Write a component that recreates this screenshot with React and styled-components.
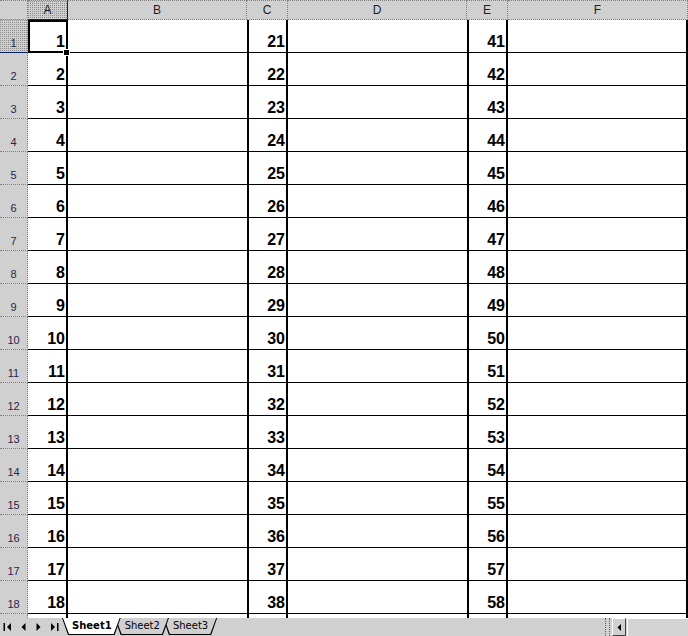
import React from "react";
import styled, { createGlobalStyle, css } from "styled-components";

const GlobalStyle = createGlobalStyle`
  html, body {
    margin: 0;
    padding: 0;
    background: #fff;
  }
  body {
    font-family: "Liberation Sans", Arial, sans-serif;
  }
`;

const COLUMNS = [
  { name: "A", thickRight: true, base: 0 },
  { name: "B" },
  { name: "C", thickLeft: true, thickRight: true, base: 20 },
  { name: "D" },
  { name: "E", thickLeft: true, thickRight: true, base: 40 },
  { name: "F", thickRight: true },
];

const ROWS = Array.from({ length: 18 }, (_, i) => i + 1);

const hatch = css`
  background-color: #d0d0d0;
  background-image: conic-gradient(at 1px 1px, transparent 75%, #8a8a8a 0);
  background-size: 2px 2px;
`;

const Window = styled.div`
  width: 688px;
  height: 636px;
  display: flex;
  flex-direction: column;
  overflow: hidden;
  background: #fff;
`;

const Sheet = styled.div`
  display: grid;
  grid-template-columns: 28px 40px 179px 41px 179px 41px 180px;
  grid-template-rows: 20px repeat(18, 33px) 4px;
`;

const Corner = styled.div`
  box-sizing: border-box;
  background: #d0d0d0;
  border-top: 1px dotted #808080;
  border-right: 1px dotted #808080;
  border-bottom: 1px dotted #808080;
`;

const ColHeader = styled.div`
  box-sizing: border-box;
  display: flex;
  align-items: center;
  justify-content: center;
  background: #d0d0d0;
  border-top: 1px dotted #808080;
  border-right: 1px dotted #808080;
  border-bottom: 1px dotted #808080;
  font-size: 12px;
  color: #1e1e2a;
  ${(p) =>
    p.$selected &&
    css`
      ${hatch};
      border-right: 1px solid #0a246a;
      border-bottom: 1px solid #0a246a;
    `}
`;

const RowHeader = styled.div`
  box-sizing: border-box;
  display: flex;
  align-items: flex-end;
  justify-content: center;
  padding-bottom: 3px;
  background: #d0d0d0;
  border-right: 1px dotted #808080;
  border-bottom: ${(p) => (p.$tail ? "none" : "1px dotted #808080")};
  font-size: 11px;
  line-height: 11px;
  color: #26264e;
  ${(p) =>
    p.$selected &&
    css`
      ${hatch};
      border-bottom: 1px solid #0a246a;
    `}
`;

const Cell = styled.div`
  box-sizing: border-box;
  position: relative;
  display: flex;
  align-items: flex-end;
  justify-content: flex-end;
  padding: 0 1px 2px 0;
  background: #fff;
  border-bottom: ${(p) => (p.$tail ? "none" : "1px solid #000")};
  border-left: ${(p) => (p.$thickLeft ? "2px solid #000" : "none")};
  border-right: ${(p) => (p.$thickRight ? "2px solid #000" : "none")};
  font-weight: bold;
  font-size: 16px;
  line-height: 16px;
  color: #000;
  ${(p) =>
    p.$selected &&
    css`
      outline: 2px solid #000;
      outline-offset: -2px;
      z-index: 2;
      &::after {
        content: "";
        position: absolute;
        right: -4px;
        bottom: -4px;
        width: 5px;
        height: 5px;
        background: #000;
        border: 1px solid #fff;
      }
    `}
`;

const TabBar = styled.div`
  height: 18px;
  display: flex;
  align-items: flex-start;
  background: #d0d0d0;
  font-family: "DejaVu Sans", Verdana, sans-serif;
`;

const NavGroup = styled.div`
  display: flex;
  width: 68px;
  height: 18px;
`;

const NavButton = styled.div`
  width: 15.5px;
  height: 18px;
  display: flex;
  align-items: center;
  justify-content: center;
`;

const Tabs = styled.div`
  display: flex;
  align-items: flex-start;
  margin-left: -6px;
  flex: 1;
`;

const trapezoid = "polygon(0 0, 100% 0, calc(100% - 6px) 100%, 6px 100%)";

const Tab = styled.div`
  position: relative;
  z-index: ${(p) => p.$z};
  height: 17px;
  padding: 0 9px 0 10px;
  margin-right: -6px;
  font-size: 10px;
  line-height: 15px;
  font-weight: ${(p) => (p.$active ? "bold" : "normal")};
  color: #000;
  white-space: nowrap;
  &::before,
  &::after {
    content: "";
    position: absolute;
    z-index: -1;
    clip-path: ${trapezoid};
  }
  &::before {
    inset: 0;
    background: #000;
  }
  &::after {
    inset: 0 1px 1px 1px;
    background: ${(p) => (p.$active ? "#fff" : "#d0d0d0")};
  }
`;

const Split = styled.div`
  width: 3px;
  height: 18px;
  margin-right: 2px;
  border-left: 1px dotted #606060;
  border-right: 1px dotted #606060;
`;

const ScrollButton = styled.div`
  box-sizing: border-box;
  width: 14px;
  height: 18px;
  display: flex;
  align-items: center;
  justify-content: center;
  background: #d0d0d0;
  border-top: 1px solid #fff;
  border-left: 1px solid #fff;
  border-right: 1px solid #404040;
  border-bottom: 1px solid #404040;
`;

const Track = styled.div`
  box-sizing: border-box;
  width: 61px;
  height: 18px;
  margin-left: 1px;
  background: #d4d4d4;
  border-top: 1px solid #fff;
  border-left: 1px solid #fff;
`;

const Arrow = ({ dir = "left", bar = false }) => (
  <svg width="9" height="8" viewBox="0 0 9 8">
    {dir === "left" ? (
      <>
        {bar && <rect x="0.5" y="0" width="1.5" height="8" fill="#000" />}
        <polygon points={bar ? "8,0 8,8 4,4" : "6.5,0 6.5,8 2.5,4"} fill="#000" />
      </>
    ) : (
      <>
        <polygon points={bar ? "1,0 1,8 5,4" : "2.5,0 2.5,8 6.5,4"} fill="#000" />
        {bar && <rect x="7" y="0" width="1.5" height="8" fill="#000" />}
      </>
    )}
  </svg>
);

const SmallLeft = () => (
  <svg width="4" height="7" viewBox="0 0 4 7">
    <polygon points="4,0 4,7 0.5,3.5" fill="#000" />
  </svg>
);

const App = () => {
  return (
    <>
      <GlobalStyle />
      <Window>
        <Sheet>
          <Corner />
          {COLUMNS.map((c) => (
            <ColHeader key={c.name} $selected={c.name === "A"}>
              {c.name}
            </ColHeader>
          ))}
          {ROWS.map((r) => (
            <React.Fragment key={r}>
              <RowHeader $selected={r === 1}>{r}</RowHeader>
              {COLUMNS.map((c) => (
                <Cell
                  key={c.name}
                  $thickLeft={c.thickLeft}
                  $thickRight={c.thickRight}
                  $selected={r === 1 && c.name === "A"}
                >
                  {c.base !== undefined ? r + c.base : ""}
                </Cell>
              ))}
            </React.Fragment>
          ))}
          <RowHeader $tail />
          {COLUMNS.map((c) => (
            <Cell
              key={c.name}
              $tail
              $thickLeft={c.thickLeft}
              $thickRight={c.thickRight}
            />
          ))}
        </Sheet>
        <TabBar>
          <NavGroup>
            <NavButton>
              <Arrow dir="left" bar />
            </NavButton>
            <NavButton>
              <Arrow dir="left" />
            </NavButton>
            <NavButton>
              <Arrow dir="right" />
            </NavButton>
            <NavButton>
              <Arrow dir="right" bar />
            </NavButton>
          </NavGroup>
          <Tabs>
            <Tab $active $z={3}>Sheet1</Tab>
            <Tab $z={2}>Sheet2</Tab>
            <Tab $z={1}>Sheet3</Tab>
          </Tabs>
          <Split />
          <ScrollButton>
            <SmallLeft />
          </ScrollButton>
          <Track />
        </TabBar>
      </Window>
    </>
  );
};

export default App;
